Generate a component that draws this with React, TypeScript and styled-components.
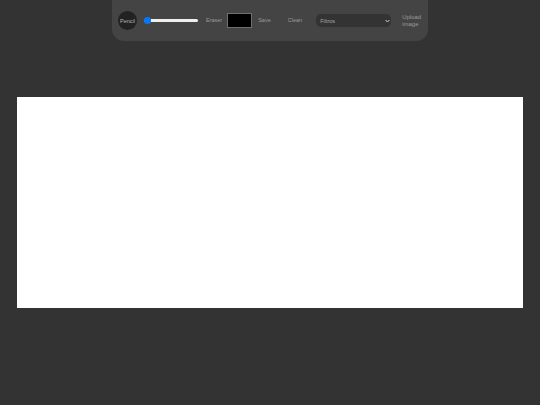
import styled, { createGlobalStyle } from "styled-components";

const GlobalStyle = createGlobalStyle`
  html, body {
    margin: 0;
    height: 100%;
    background-color: #333333;
    font-family: "Liberation Sans", Arial, sans-serif;
  }
`;

const Page = styled.div`
  width: 540px;
  height: 405px;
  overflow: hidden;
  display: flex;
  flex-direction: column;
  align-items: center;
`;

const Toolbar = styled.div`
  width: 316px;
  height: 41px;
  box-sizing: border-box;
  padding: 0 6px;
  display: flex;
  align-items: center;
  background-color: #444444;
  border-radius: 0 0 12px 12px;
`;

const RoundButton = styled.button`
  width: 19px;
  height: 19px;
  padding: 0;
  flex: none;
  border: 0;
  border-radius: 50%;
  background-color: #222222;
  color: #b5b5b5;
  font-family: inherit;
  font-size: 5.5px;
`;

const Slider = styled.input`
  width: 54px;
  height: 8px;
  margin: 0 0 0 7px;
  flex: none;
  appearance: none;
  background: transparent;

  &::-webkit-slider-runnable-track {
    height: 3px;
    border-radius: 2px;
    background-color: #efefef;
  }

  &::-webkit-slider-thumb {
    appearance: none;
    width: 6.5px;
    height: 6.5px;
    margin-top: -1.75px;
    border-radius: 50%;
    background-color: #0a75f0;
  }
`;

const TextButton = styled.button<{ $left: number }>`
  margin: 0 0 0 ${(p) => p.$left}px;
  padding: 0;
  flex: none;
  border: 0;
  background: transparent;
  color: #9a9a9a;
  font-family: inherit;
  font-size: 5.5px;
  line-height: 7px;
  text-align: left;
`;

const UploadButton = styled(TextButton)`
  font-size: 6px;
`;

const Swatch = styled.div`
  width: 25px;
  height: 15px;
  margin-left: 5px;
  flex: none;
  box-sizing: border-box;
  border: 1px solid #6f6f6f;
  background-color: #000000;
`;

const SelectWrap = styled.div`
  position: relative;
  width: 75px;
  height: 13px;
  margin-left: 14px;
  flex: none;
`;

const FilterSelect = styled.select`
  width: 100%;
  height: 100%;
  padding: 0 0 0 4px;
  display: block;
  appearance: none;
  border: 0;
  border-radius: 5px;
  background-color: #333333;
  color: #a5a5a5;
  font-family: inherit;
  font-size: 5.5px;
`;

const Chevron = styled.svg`
  position: absolute;
  top: 5px;
  right: 1px;
  width: 5px;
  height: 4px;
  pointer-events: none;
`;

const Sheet = styled.div`
  width: 506px;
  height: 211px;
  margin-top: 56px;
  flex: none;
  background-color: #ffffff;
`;

export default function App() {
  return (
    <Page>
      <GlobalStyle />
      <Toolbar>
        <RoundButton>Pencil</RoundButton>
        <Slider type="range" min={1} max={50} defaultValue={1} />
        <TextButton $left={8}>Eraser</TextButton>
        <Swatch />
        <TextButton $left={6}>Save</TextButton>
        <TextButton $left={17}>Clean</TextButton>
        <SelectWrap>
          <FilterSelect defaultValue="Filtros">
            <option>Filtros</option>
          </FilterSelect>
          <Chevron viewBox="0 0 5 4">
            <path d="M0.6 1 L2.5 3 L4.4 1" fill="none" stroke="#cfcfcf" strokeWidth="1" />
          </Chevron>
        </SelectWrap>
        <UploadButton $left={11}>
          Upload
          <br />
          image
        </UploadButton>
      </Toolbar>
      <Sheet />
    </Page>
  );
}
